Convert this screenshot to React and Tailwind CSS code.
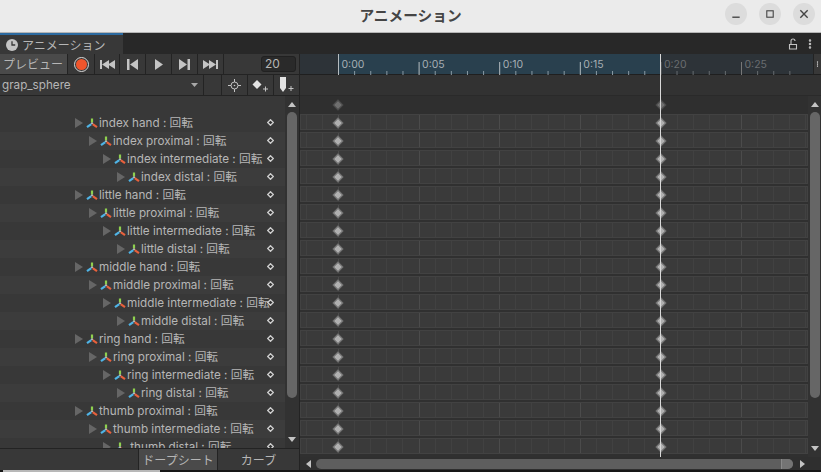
import { Ellipsis } from 'lucide-react';

const FONT = "font-['Inter','Noto_Sans_CJK_JP',sans-serif]";

const TRACKS = [
  ['index hand', 0], ['index proximal', 1], ['index intermediate', 2], ['index distal', 3],
  ['little hand', 0], ['little proximal', 1], ['little intermediate', 2], ['little distal', 3],
  ['middle hand', 0], ['middle proximal', 1], ['middle intermediate', 2], ['middle distal', 3],
  ['ring hand', 0], ['ring proximal', 1], ['ring intermediate', 2], ['ring distal', 3],
  ['thumb proximal', 0], ['thumb intermediate', 1], [' thumb distal', 2],
];

const INDENT = ['w-[75px]', 'w-[89px]', 'w-[103px]', 'w-[117px]'];

function AxisIcon() {
  return (
    <svg width="12" height="11" viewBox="0 0 12 11" className="shrink-0">
      <path d="M6 .5v4" stroke="#8fd14f" strokeWidth="2.200" />
      <path d="M6 4.500v1.500" stroke="#d8d8d8" strokeWidth="1.600" />
      <path d="M5.300 6.200 1 9.200" stroke="#4fb4e6" strokeWidth="2.200" />
      <path d="M6.700 6.200 11 9.200" stroke="#e8613c" strokeWidth="2.200" />
    </svg>
  );
}

function SmallDiamond() {
  return (
    <svg width="7" height="7" viewBox="0 0 7 7" className="block">
      <path d="M3.500.7 6.300 3.500 3.500 6.300.7 3.500z" fill="#333" stroke="#cfcfcf" strokeWidth="1.300" />
    </svg>
  );
}

function Key({ x, dim }) {
  return (
    <div
      className={`absolute top-1/2 w-[6px] h-[6px] -mt-[3px] -ml-[3px] rotate-45 ${dim ? 'bg-[#6e6e6e] outline outline-1 outline-[#4c4c4c]' : 'bg-[#b0b0b0] outline outline-1 outline-[#757575]'}`}
      style={{ left: x }}
    />
  );
}

function TransportButton({ children, width = 'w-[26px]' }) {
  return (
    <div className={`${width} h-full flex items-center justify-center border-r border-[#232323] text-[#c4c4c4]`}>
      {children}
    </div>
  );
}

function TrackRow({ name, depth, shaded }) {
  return (
    <div className={`h-[18px] shrink-0 flex items-center relative ${shaded ? 'bg-[#3c3c3c]' : 'bg-[#383838]'}`}>
      <div className={`${INDENT[depth]} shrink-0`} />
      <svg width="8" height="10" viewBox="0 0 8 10" className="shrink-0">
        <path d="M0 0 8 5 0 10z" fill="#666" />
      </svg>
      <div className="w-[3px] shrink-0" />
      <AxisIcon />
      <span className="ml-[1px] pt-[2px] text-[11.7px] text-[#b6b6b6] whitespace-pre leading-none">{name} : 回転</span>
      <div className="absolute left-[267px] top-[5px]">
        <SmallDiamond />
      </div>
    </div>
  );
}

function Ruler() {
  const labels = ['0:00', '0:05', '0:10', '0:15', '0:20', '0:25'];
  const step = 80.6;
  const minor = [];
  for (let i = 0; i < 30; i++) {
    const x = 38.5 + (i * step) / 5;
    if (i % 5 !== 0 && x < 505) minor.push(x);
  }
  return (
    <svg width="513" height="21" viewBox="0 0 513 21" className="block">
      {minor.map((x) => (
        <path key={x} d={`M${x} 17v4`} stroke={x < 361 ? '#8a9aa4' : '#666b6e'} />
      ))}
      {labels.map((l, i) => (
        <g key={l}>
          <path d={`M${38.5 + i * step} ${i === 0 ? 0 : 8}V21`} stroke={i < 4 ? '#b5bcc0' : '#777'} />
          <text x={41.5 + i * step} y="14" fontSize="10.5" fill={i < 4 ? '#a6aeb3' : '#6a6d70'} fontFamily="Inter">{l}</text>
        </g>
      ))}
    </svg>
  );
}

export default function App() {
  return (
    <div className={`w-[821px] h-[472px] overflow-hidden flex flex-col bg-[#282828] ${FONT}`}>
      {/* window title bar */}
      <div className="h-[33px] shrink-0 bg-[#ebebeb] border-b border-[#b5b5b5] flex items-center relative">
        <div className="flex-1 text-center text-[14.7px] font-bold text-[#444] font-['Noto_Sans_CJK_JP',sans-serif] leading-none pb-[2px]">アニメーション</div>
        <div className="absolute right-[6px] top-[3px] flex gap-[12px]">
          {[
            <path key="a" d="M8 15.500h8" stroke="#444" strokeWidth="1.500" />,
            <rect key="b" x="8.500" y="8.500" width="7" height="7" fill="none" stroke="#444" strokeWidth="1.200" />,
            <path key="c" d="M8 8l8 8M16 8l-8 8" stroke="#444" strokeWidth="1.500" />,
          ].map((p, i) => (
            <div key={i} className="w-[22px] h-[22px] rounded-full bg-[#dcdcdc] flex items-center justify-center">
              <svg width="24" height="24" viewBox="0 0 24 24">{p}</svg>
            </div>
          ))}
        </div>
      </div>

      {/* tab strip */}
      <div className="h-[21px] shrink-0 flex bg-[#282828] relative">
        <div className="w-[123px] h-full bg-[#383838] border-t-2 border-[#2c6aa0] flex items-center pl-[6px] gap-[4px]">
          <svg width="12" height="12" viewBox="0 0 13 13" className="shrink-0">
            <circle cx="6.500" cy="6.500" r="6.500" fill="#c4c4c4" />
            <path d="M6.500 2.500v4h3.500" stroke="#383838" strokeWidth="1.400" fill="none" />
          </svg>
          <span className="text-[12px] text-[#b6b6b6] leading-none font-['Noto_Sans_CJK_JP',sans-serif]">アニメーション</span>
        </div>
        <div className="ml-auto flex items-center gap-[5px] pr-[5px]">
          <svg width="11" height="12" viewBox="0 0 11 12">
            <path d="M1.500 6.500h7v4.500h-7zM3 6.500V3a2 2 0 0 1 4 0" fill="none" stroke="#c4c4c4" strokeWidth="1.100" />
          </svg>
          <Ellipsis size={12} className="rotate-90 text-[#c4c4c4]" strokeWidth={3} />
        </div>
      </div>

      <div className="flex-1 min-h-0 flex">
        {/* left panel */}
        <div className="w-[300px] shrink-0 flex flex-col bg-[#383838] border-r border-[#232323]">
          <div className="h-[21px] shrink-0 flex items-center border-b border-[#232323]">
            <div className="w-[68px] h-full bg-[#4a4a4a] border-r border-[#232323] flex items-center pl-[3px] text-[12px] text-[#b6b6b6] font-['Noto_Sans_CJK_JP',sans-serif]">プレビュー</div>
            <TransportButton width="w-[27px]">
              <div className="w-[15px] h-[15px] rounded-full border border-[#d8d8d8] flex items-center justify-center">
                <div className="w-[11px] h-[11px] rounded-full bg-[#f0552c]" />
              </div>
            </TransportButton>
            <TransportButton width="w-[25px]">
              <svg width="15" height="9" viewBox="0 0 15 9"><path d="M0 0h2v9H0zM9 0v9L2 4.500zM15 0v9L8 4.500z" fill="#c4c4c4" /></svg>
            </TransportButton>
            <TransportButton>
              <svg width="11" height="11" viewBox="0 0 11 11"><path d="M0 0h2.500v11H0zM11 0v11L3 5.500z" fill="#c4c4c4" /></svg>
            </TransportButton>
            <TransportButton>
              <svg width="8" height="11" viewBox="0 0 8 11"><path d="M0 0l8 5.500-8 5.500z" fill="#c4c4c4" /></svg>
            </TransportButton>
            <TransportButton>
              <svg width="11" height="11" viewBox="0 0 11 11"><path d="M8.500 0H11v11H8.500zM0 0v11l8-5.500z" fill="#c4c4c4" /></svg>
            </TransportButton>
            <TransportButton>
              <svg width="15" height="9" viewBox="0 0 15 9"><path d="M13 0h2v9h-2zM0 0v9l7-4.500zM6 0v9l7-4.500z" fill="#c4c4c4" /></svg>
            </TransportButton>
            <div className="flex-1 flex justify-end pr-[3px]">
              <div className="w-[35px] h-[16px] bg-[#2a2a2a] border border-[#212121] rounded-[3px] text-[12px] leading-[14px] pl-[3px] text-[#b6b6b6]">20</div>
            </div>
          </div>
          <div className="h-[21px] shrink-0 flex items-center border-b border-[#232323]">
            <span className="pl-[2px] pt-[2px] text-[11.7px] text-[#b6b6b6] leading-none">grap_sphere</span>
            <svg width="7" height="4" viewBox="0 0 7 4" className="ml-auto mr-[5px]"><path d="M0 0h7L3.500 4z" fill="#a8a8a8" /></svg>
            <div className="w-[18px] h-full border-l border-[#232323]" />
            <div className="w-[26px] h-full border-l border-[#232323] flex items-center justify-center">
              <svg width="13" height="13" viewBox="0 0 13 13">
                <circle cx="6.500" cy="6.500" r="3.500" fill="none" stroke="#c4c4c4" />
                <circle cx="6.500" cy="6.500" r="0.800" fill="#c4c4c4" />
                <path d="M6.500 0v3M6.500 10v3M0 6.500h3M10 6.500h3" stroke="#c4c4c4" />
              </svg>
            </div>
            <div className="w-[26px] h-full border-l border-[#232323] flex items-center justify-center">
              <svg width="17" height="13" viewBox="0 0 17 13">
                <path d="M5 1l4.500 4.500L5 10 .5 5.500z" fill="#e4e4e4" />
                <path d="M11 10h5M13.500 7.500v5" stroke="#c4c4c4" />
              </svg>
            </div>
            <div className="w-[26px] h-full border-l border-[#232323] flex items-center justify-center">
              <svg width="15" height="16" viewBox="0 0 15 16">
                <path d="M1 0h6v11L4 15l-3-4z" fill="#e4e4e4" />
                <path d="M9.500 11.500h5M12 9v5" stroke="#c4c4c4" />
              </svg>
            </div>
          </div>

          <div className="flex-1 min-h-0 flex">
            <div className="flex-1 min-w-0 overflow-hidden flex flex-col">
              <div className="h-[18px] shrink-0" />
              {TRACKS.map(([name, depth], i) => (
                <TrackRow key={name} name={name} depth={depth} shaded={i % 2 === 1} />
              ))}
            </div>
            <div className="w-[14px] shrink-0 bg-[#323232] flex flex-col items-center py-[6px]">
              <svg width="8" height="5" viewBox="0 0 8 5"><path d="M4 0l4 5H0z" fill="#c4c4c4" /></svg>
              <div className="w-[10px] h-[286px] mt-[5px] rounded-full bg-[#666]" />
              <svg width="8" height="5" viewBox="0 0 8 5" className="mt-auto"><path d="M4 5 8 0H0z" fill="#c4c4c4" /></svg>
            </div>
          </div>

          <div className="h-[22px] shrink-0 border-t border-[#232323] flex justify-end">
            <div className="w-[80px] h-full bg-[#4a4a4a] border-x border-[#232323] flex items-center justify-center text-[12px] text-[#b6b6b6] font-['Noto_Sans_CJK_JP',sans-serif]">ドープシート</div>
            <div className="w-[81px] h-full flex items-center justify-center text-[12px] text-[#b6b6b6] font-['Noto_Sans_CJK_JP',sans-serif]">カーブ</div>
          </div>
        </div>

        {/* timeline */}
        <div className="flex-1 min-w-0 flex flex-col relative">
          <div className="h-[21px] shrink-0 flex border-b border-[#1f1f1f] bg-[#2d3338] relative">
            <div className="w-[38px] shrink-0" />
            <div className="w-[323px] shrink-0 bg-[#29404e]" />
            <div className="absolute left-0 top-0"><Ruler /></div>
            <div className="ml-auto w-[8px] bg-[#383838] flex items-center justify-center border-l border-[#232323]">
              <Ellipsis size={10} className="rotate-90 text-[#c4c4c4]" strokeWidth={3} />
            </div>
          </div>
          <div className="h-[21px] shrink-0 bg-[#323232] border-b border-[#2a2a2a]" />

          <div className="flex-1 min-h-0 flex bg-[#303030]">
            <div className="flex-1 min-w-0 overflow-hidden flex flex-col relative">
              <div className="h-[18px] shrink-0 relative bg-[#2f2f2f]">
                <Key x={38} dim />
                <Key x={361} dim />
              </div>
              {Array.from({ length: 19 }, (_, i) => (
                <div key={i} className="h-[18px] shrink-0 relative pb-[2px]">
                  <div className="h-full border border-[#424242] bg-[#3a3a3a] bg-[repeating-linear-gradient(90deg,transparent_0_37px,#4b4b4b_37px_38px,transparent_38px_80.6px),repeating-linear-gradient(90deg,transparent_0_4.76px,#414141_4.76px_5.76px,transparent_5.76px_16.12px)]" />
                  <Key x={38} />
                  <Key x={361} />
                </div>
              ))}
            </div>
            <div className="w-[13px] shrink-0 bg-[#323232] flex flex-col items-center py-[6px]">
              <svg width="8" height="5" viewBox="0 0 8 5"><path d="M4 0l4 5H0z" fill="#c4c4c4" /></svg>
              <div className="w-[10px] h-[286px] mt-[5px] rounded-full bg-[#666]" />
              <svg width="8" height="5" viewBox="0 0 8 5" className="mt-auto"><path d="M4 5 8 0H0z" fill="#c4c4c4" /></svg>
            </div>
          </div>

          <div className="h-[13px] shrink-0 bg-[#2f2f2f] flex items-center pl-[6px] pr-[16px]">
            <svg width="5" height="8" viewBox="0 0 5 8" className="shrink-0"><path d="M5 0v8L0 4z" fill="#c4c4c4" /></svg>
            <div className="ml-[5px] flex-1 h-[10px] rounded-full bg-[#5e5e5e] overflow-hidden flex justify-end">
              <div className="w-[12px] h-full bg-[#747474] border-l border-[#8a8a8a]" />
            </div>
            <svg width="5" height="8" viewBox="0 0 5 8" className="shrink-0 ml-[7px]"><path d="M0 0v8l5-4z" fill="#c4c4c4" /></svg>
          </div>

          {/* playhead */}
          <div className="absolute left-[360px] top-0 bottom-[13px] w-[1px] bg-[#d8d8d8]" />
        </div>
      </div>

      {/* sliver of what lies behind the window */}
      <div className="h-[2px] shrink-0 bg-[#161616] flex">
        <div className="ml-[3px] w-[157px] h-full bg-[#b8b8b8]" />
      </div>
    </div>
  );
}
